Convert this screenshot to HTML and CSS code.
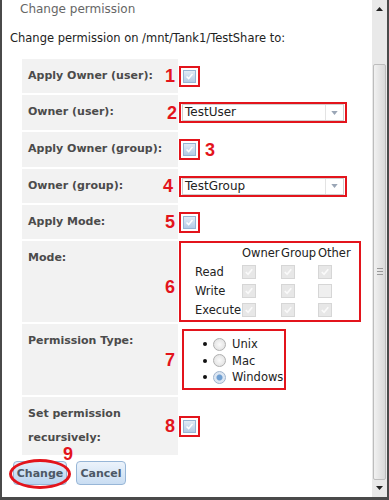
FILE: index.html
```html
<!DOCTYPE html>
<html lang="en">
<head>
    <meta charset="UTF-8">
    <meta name="viewport" content="width=device-width, initial-scale=1.0">
    <title>Change permission</title>
    <link rel="stylesheet" href="styles.css">
</head>
<body>

<div class="dialog">
    <div class="content">
        <div class="title">Change permission</div>
        <p class="intro">Change permission on /mnt/Tank1/TestShare to:</p>

        <table class="form">
            <tr>
                <th>Apply Owner (user): <span class="num">1</span></th>
                <td><span class="mark"><span class="cb on"><svg viewBox="0 0 13 13"><path d="M3 6.5 5.5 9 10 3.5"/></svg></span></span></td>
            </tr>
            <tr class="wide">
                <th>Owner (user): <span class="num n2">2</span></th>
                <td>
                    <span class="mark sel">
                        <span class="select"><span class="val">TestUser</span><span class="arrow"><svg viewBox="0 0 8 5"><path d="M0 0h8L4 5z"/></svg></span></span>
                    </span>
                </td>
            </tr>
            <tr class="wide">
                <th>Apply Owner (group):</th>
                <td>
                    <div class="cell">
                        <span class="mark"><span class="cb on"><svg viewBox="0 0 13 13"><path d="M3 6.5 5.5 9 10 3.5"/></svg></span></span>
                        <span class="num inline">3</span>
                    </div>
                </td>
            </tr>
            <tr>
                <th>Owner (group): <span class="num n4">4</span></th>
                <td>
                    <span class="mark sel">
                        <span class="select"><span class="val">TestGroup</span><span class="arrow"><svg viewBox="0 0 8 5"><path d="M0 0h8L4 5z"/></svg></span></span>
                    </span>
                </td>
            </tr>
            <tr>
                <th>Apply Mode: <span class="num">5</span></th>
                <td><span class="mark"><span class="cb on"><svg viewBox="0 0 13 13"><path d="M3 6.5 5.5 9 10 3.5"/></svg></span></span></td>
            </tr>
            <tr>
                <th>Mode: <span class="num n6">6</span></th>
                <td>
                    <div class="mark mode">
                        <span></span><span>Owner</span><span>Group</span><span>Other</span>
                        <span>Read</span>
                        <span class="cb off"><svg viewBox="0 0 13 13"><path d="M3 6.5 5.5 9 10 3.5"/></svg></span>
                        <span class="cb off"><svg viewBox="0 0 13 13"><path d="M3 6.5 5.5 9 10 3.5"/></svg></span>
                        <span class="cb off"><svg viewBox="0 0 13 13"><path d="M3 6.5 5.5 9 10 3.5"/></svg></span>
                        <span>Write</span>
                        <span class="cb off"><svg viewBox="0 0 13 13"><path d="M3 6.5 5.5 9 10 3.5"/></svg></span>
                        <span class="cb off"><svg viewBox="0 0 13 13"><path d="M3 6.5 5.5 9 10 3.5"/></svg></span>
                        <span class="cb off empty"></span>
                        <span>Execute</span>
                        <span class="cb off"><svg viewBox="0 0 13 13"><path d="M3 6.5 5.5 9 10 3.5"/></svg></span>
                        <span class="cb off"><svg viewBox="0 0 13 13"><path d="M3 6.5 5.5 9 10 3.5"/></svg></span>
                        <span class="cb off"><svg viewBox="0 0 13 13"><path d="M3 6.5 5.5 9 10 3.5"/></svg></span>
                    </div>
                </td>
            </tr>
            <tr class="tall">
                <th>Permission Type: <span class="num n7">7</span></th>
                <td>
                    <ul class="mark types">
                        <li><span class="dot"></span><span class="radio"></span>Unix</li>
                        <li><span class="dot"></span><span class="radio"></span>Mac</li>
                        <li><span class="dot"></span><span class="radio on"></span>Windows</li>
                    </ul>
                </td>
            </tr>
            <tr>
                <th>Set permission<br>recursively: <span class="num">8</span></th>
                <td><span class="mark"><span class="cb on"><svg viewBox="0 0 13 13"><path d="M3 6.5 5.5 9 10 3.5"/></svg></span></span></td>
            </tr>
        </table>

        <div class="buttons">
            <div class="btn-wrap">
                <button class="btn change">Change</button>
                <span class="ring"></span>
                <span class="num n9">9</span>
            </div>
            <button class="btn cancel">Cancel</button>
        </div>
    </div>

    <div class="scrollbar">
        <div class="sb-btn"><svg viewBox="0 0 7 4"><path d="M3.5 0 7 4H0z"/></svg></div>
        <div class="sb-track">
            <div class="thumb"><span class="grip"></span></div>
        </div>
        <div class="sb-btn down"><svg viewBox="0 0 7 4"><path d="M0 0h7L3.5 4z"/></svg></div>
    </div>
</div>

</body>
</html>
```

FILE: styles.css
```css
body {
    margin: 0;
    font-family: "DejaVu Sans", Verdana, sans-serif;
    font-size: 11px;
    color: #222;
    background-color: #fff;
}
.dialog {
    width: 389px;
    height: 500px;
    box-sizing: border-box;
    border-left: 2px solid #4a4a4a;
    border-right: 2px solid #4a4a4a;
    border-bottom: 3px solid #4a4a4a;
    display: flex;
    overflow: hidden;
}
.content {
    flex: 1;
    padding-left: 8px;
}
.title {
    margin-left: 10px;
    line-height: 18px;
    font-size: 12px;
    color: #666;
}
.intro {
    margin: 12px 0 11px;
    line-height: 16px;
    font-size: 11.5px;
}

/* form table */
.form {
    border-collapse: separate;
    border-spacing: 2px;
    margin-left: 10px;
}
.form th {
    position: relative;
    width: 144px;
    padding: 5px 6px;
    background-color: #f2f2f2;
    color: #4b4b4b;
    font-weight: bold;
    text-align: left;
    vertical-align: top;
    line-height: 24px;
}
.form tr.wide th {
    padding-bottom: 6px;
}
.form td {
    padding: 0;
    vertical-align: middle;
}
.form tr.tall td {
    height: 71px;
}
.cell {
    display: flex;
    align-items: center;
    gap: 5px;
}

/* red annotations */
.num {
    position: absolute;
    right: 3px;
    top: 50%;
    transform: translateY(-50%);
    font: bold 18px "Liberation Sans", Arial, sans-serif;
    line-height: 1;
    color: #e3141c;
}
.num.n2 { right: 1px; }
.num.n4 { right: 5px; }
.num.n6 { margin-top: 5px; }
.num.inline {
    position: static;
    transform: none;
}
.mark {
    display: inline-flex;
    margin-left: -1px;
    padding: 2px;
    border: 2px solid #e3141c;
    vertical-align: middle;
}

/* checkboxes */
.cb {
    display: inline-block;
    width: 13px;
    height: 13px;
    box-sizing: border-box;
    border: 1px solid #97b4d3;
    background: linear-gradient(#e2ecf7, #b3cbe6);
}
.cb svg {
    display: block;
    width: 11px;
    height: 11px;
    fill: none;
    stroke: #fff;
    stroke-width: 1.8;
}
.cb.off {
    width: 14px;
    height: 14px;
    border-color: #d6d6d6;
    background: #e7e7e7;
}
.cb.off svg {
    width: 12px;
    height: 12px;
    stroke: #fafafa;
}
.cb.empty {
    background: #efefef;
}

/* selects */
.mark.sel {
    padding: 0 1px;
}
.select {
    display: flex;
    width: 162px;
    height: 17px;
    box-sizing: border-box;
    border: 1px solid #cfcfcf;
    background-color: #fff;
    font-size: 12px;
    line-height: 15px;
}
.select .val {
    flex: 1;
    padding-left: 2px;
}
.select .arrow {
    width: 17px;
    border-left: 1px solid #e3e3e3;
    display: flex;
    align-items: center;
    justify-content: center;
}
.select .arrow svg {
    width: 7px;
    height: 4px;
    fill: #9aa6b6;
}

/* mode grid */
.mark.mode {
    display: grid;
    grid-template-columns: 47px 39px 37px 41px;
    grid-auto-rows: 19px;
    align-items: center;
    padding: 0 0 1px 14px;
    font-size: 11.5px;
}

/* permission type */
.mark.types {
    display: flex;
    flex-direction: column;
    list-style: none;
    width: 104px;
    height: 61px;
    box-sizing: border-box;
    margin: 0 0 0 2px;
    padding: 5px 0 0 19px;
    font-size: 11.5px;
}
.types li {
    display: flex;
    align-items: center;
    height: 16.5px;
}
.dot {
    width: 4px;
    height: 4px;
    border-radius: 50%;
    background-color: #111;
    margin-right: 6px;
}
.radio {
    width: 13px;
    height: 13px;
    box-sizing: border-box;
    border-radius: 50%;
    border: 1px solid #b0b0b0;
    background: radial-gradient(circle, #fafafa, #dcdcdc);
    margin-right: 6px;
}
.radio.on {
    border-color: #9fb4cc;
    background: radial-gradient(circle, #6f9fd2 0, #6f9fd2 2.5px, #dce6f2 3.5px);
}

/* buttons */
.buttons {
    display: flex;
    gap: 9px;
    margin: 4px 0 0 3px;
}
.btn-wrap {
    position: relative;
    display: flex;
}
.btn {
    height: 24px;
    padding: 0;
    border: 1px solid #97b6d7;
    border-radius: 4px;
    background: linear-gradient(#ecf3fb, #c9ddf2);
    font: bold 11px "DejaVu Sans", Verdana, sans-serif;
    color: #4c5866;
}
.btn.change {
    width: 54px;
    background: linear-gradient(#e2eefb, #b9d3ef);
}
.btn.cancel {
    width: 50px;
}
.ring {
    position: absolute;
    left: -4px;
    top: -2px;
    width: 62px;
    height: 30px;
    box-sizing: border-box;
    border: 3px solid #e3141c;
    border-radius: 50%;
}
.num.n9 {
    left: 50px;
    right: auto;
    top: -16px;
    transform: none;
}

/* scrollbar */
.scrollbar {
    width: 15px;
    display: flex;
    flex-direction: column;
    background-color: #e9e9e9;
}
.sb-btn {
    height: 17px;
    display: flex;
    align-items: center;
    justify-content: center;
}
.sb-btn svg {
    width: 7px;
    height: 4px;
    fill: #222;
}
.sb-btn.down {
    align-items: flex-start;
    padding-top: 6px;
    height: 11px;
}
.sb-track {
    flex: 1;
    padding: 47px 1px 0;
}
.thumb {
    height: 416px;
    box-sizing: border-box;
    border: 1px solid #bdbdbd;
    border-radius: 2px;
    background: linear-gradient(to right, #f1f1f1, #d9d9d9);
    display: flex;
    justify-content: center;
    padding-top: 203px;
}
.grip {
    width: 6px;
    height: 5px;
    border-top: 1px solid #999;
    border-bottom: 1px solid #999;
    background: linear-gradient(#999, #999) center / 6px 1px no-repeat;
}
```
